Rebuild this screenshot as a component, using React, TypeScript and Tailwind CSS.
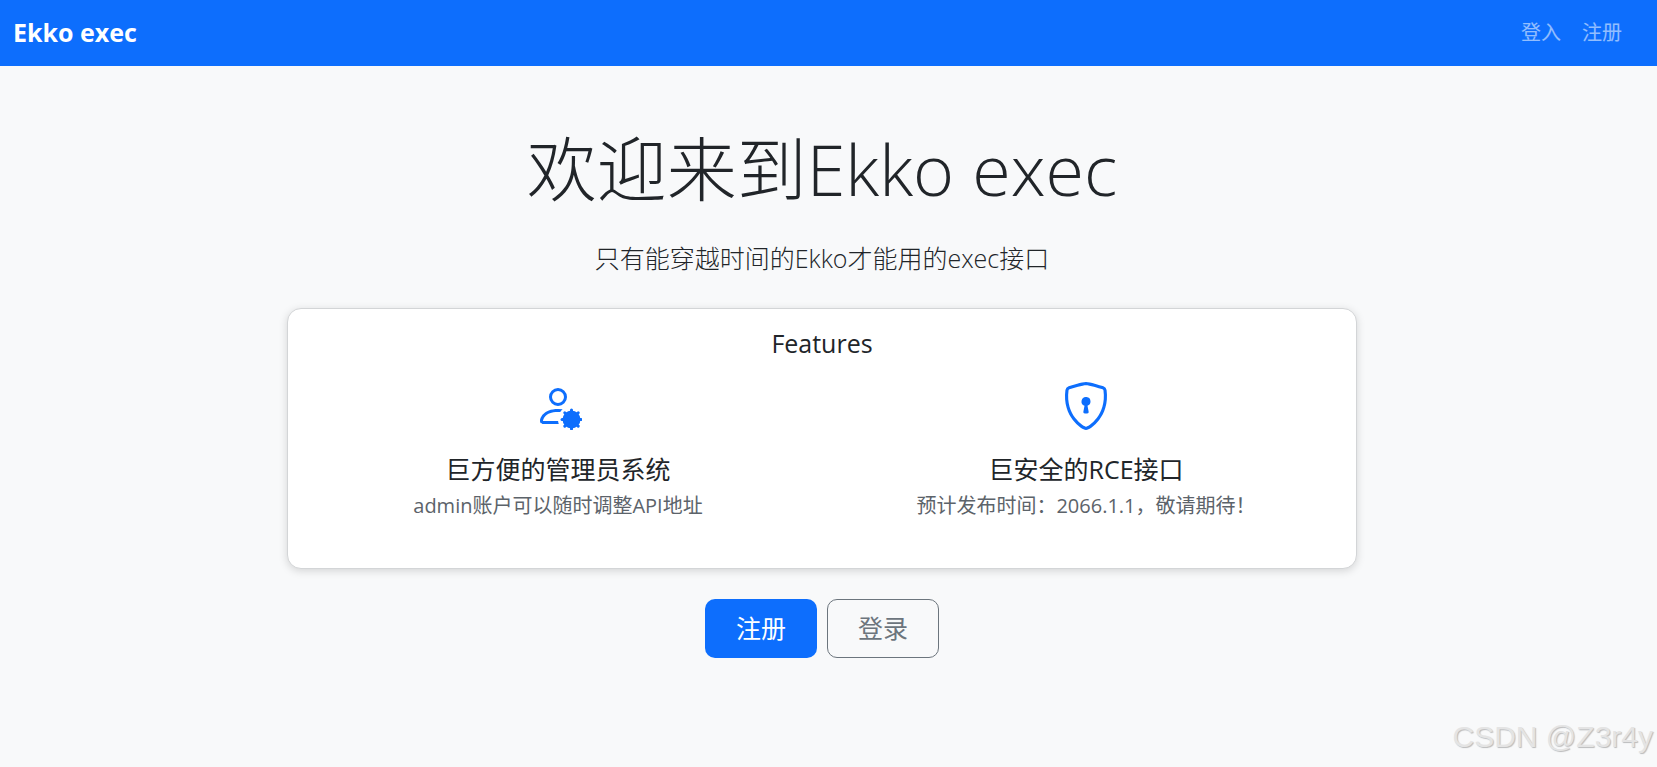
import React from 'react';
import { BsShieldLock } from 'react-icons/bs';

const FONT = "font-['Open_Sans','Noto_Sans_CJK_SC',sans-serif]";

const PersonGearIcon = () => (
  <svg viewBox="0 0 16 16" className="w-12 h-12 text-[#0d6efd]" fill="currentColor">
    <path d="M11 5a3 3 0 1 1-6 0 3 3 0 0 1 6 0M8 7a2 2 0 1 0 0-4 2 2 0 0 0 0 4m.256 7a4.5 4.5 0 0 1-.229-1.004H3c.001-.246.154-.986.832-1.664C4.484 10.68 5.711 10 8 10q.39 0 .74.025c.226-.341.496-.65.804-.918Q8.844 9.002 8 9c-5 0-6 3-6 4s1 1 1 1z" />
    <circle cx="12.5" cy="12.5" r="3" />
    <g stroke="currentColor" strokeWidth="1" strokeLinecap="round">
      <line x1="12.5" y1="9.35" x2="12.5" y2="15.65" />
      <line x1="9.35" y1="12.5" x2="15.65" y2="12.5" />
      <line x1="10.25" y1="10.25" x2="14.75" y2="14.75" />
      <line x1="10.25" y1="14.75" x2="14.75" y2="10.25" />
    </g>
  </svg>
);

const features = [
  { icon: <PersonGearIcon />, title: '巨方便的管理员系统', text: 'admin账户可以随时调整API地址' },
  { icon: <BsShieldLock className="w-12 h-12 text-[#0d6efd]" />, title: '巨安全的RCE接口', text: '预计发布时间：2066.1.1，敬请期待！' },
];

export default function App() {
  return (
    <div className={`${FONT} relative min-h-[767px] bg-[#f8f9fa] text-[#212529]`}>
      {/* Navbar */}
      <nav className="h-[66px] bg-[#0d6efd] flex items-center justify-between pl-[13px] pr-[35px]">
        <a className="text-[25px] font-bold text-white">Ekko exec</a>
        <div className="flex gap-[21px] text-[20px] text-white/55">
          <span>登入</span>
          <span>注册</span>
        </div>
      </nav>

      <main className="flex flex-col items-center pr-[13px]">
        <h1 className="mt-[60px] text-[70px] leading-[86px] font-light">欢迎来到Ekko exec</h1>
        <p className="mt-[28px] text-[25px] leading-[36px] font-light">只有能穿越时间的Ekko才能用的exec接口</p>

        {/* Feature card */}
        <section className="mt-[32px] w-[1070px] h-[261px] bg-white border border-[#d3d5d7] rounded-[14px] shadow-[0_2px_8px_rgba(0,0,0,0.15)] px-[6px] pt-[16px]">
          <h2 className="text-center text-[25px] leading-[36px]">Features</h2>
          <div className="grid grid-cols-2 mt-[21px]">
            {features.map((f) => (
              <div key={f.title} className="flex flex-col items-center">
                {f.icon}
                <h3 className="mt-[21px] text-[25px] leading-[36px] font-normal">{f.title}</h3>
                <p className="mt-px text-[20px] leading-[36px] text-[#5c636a]">{f.text}</p>
              </div>
            ))}
          </div>
        </section>

        <div className="mt-[30px] flex gap-[10px]">
          <button className="w-[112px] h-[59px] rounded-[10px] bg-[#0d6efd] text-white text-[25px]">注册</button>
          <button className="w-[112px] h-[59px] rounded-[10px] border border-[#6c757d] text-[#6c757d] text-[25px]">登录</button>
        </div>
      </main>

      {/* Watermark */}
      <div className="absolute right-[4px] bottom-[14px] font-['Liberation_Sans',sans-serif] text-[30px] leading-[32px] text-[#e4e4e4] [text-shadow:1px_1px_1px_rgba(0,0,0,0.25)]">
        CSDN @Z3r4y
      </div>
    </div>
  );
}
